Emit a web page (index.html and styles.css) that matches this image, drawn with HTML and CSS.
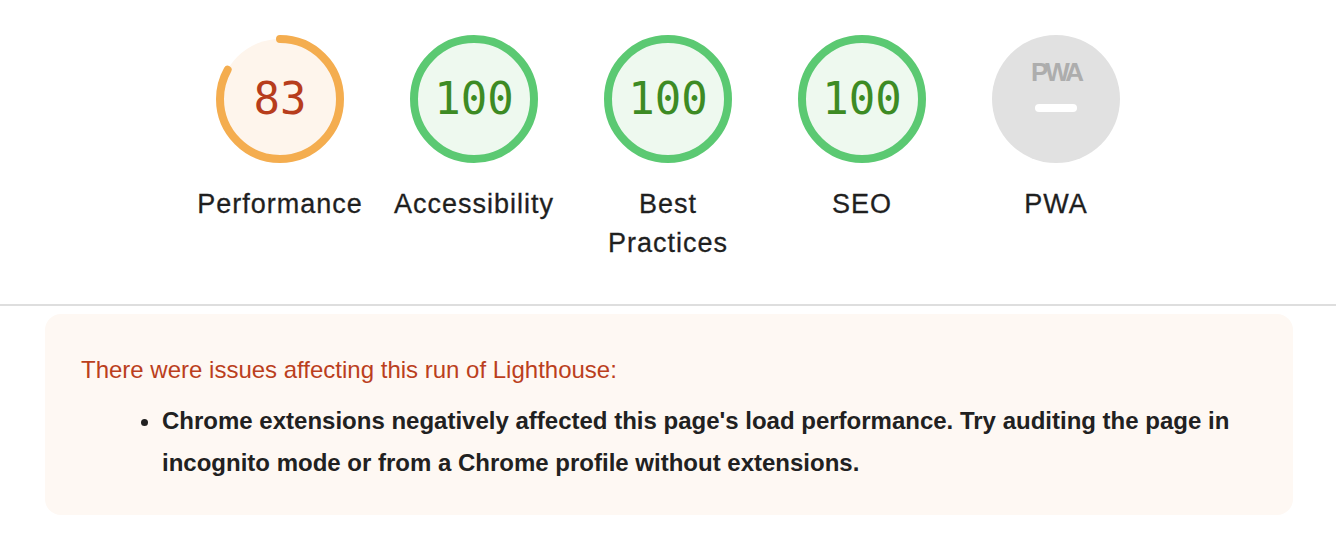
FILE: index.html
```html
<!DOCTYPE html>
<html lang="en">
<head>
<meta charset="utf-8">
<title>Lighthouse report</title>
<link rel="stylesheet" href="styles.css">
</head>
<body>
<div class="scores">
  <div class="gauges">
    <div class="gauge">
      <div class="ring">
        <svg viewBox="0 0 128 128" width="128" height="128">
          <circle class="fill-avg" cx="64" cy="64" r="60"/>
          <circle class="arc-avg" cx="64" cy="64" r="60" stroke-dasharray="312.9 400" transform="rotate(-90 64 64)"/>
        </svg>
        <span class="score score-avg">83</span>
      </div>
      <div class="label">Performance</div>
    </div>
    <div class="gauge">
      <div class="ring">
        <svg viewBox="0 0 128 128" width="128" height="128">
          <circle class="fill-pass" cx="64" cy="64" r="60"/>
          <circle class="arc-pass" cx="64" cy="64" r="60"/>
        </svg>
        <span class="score score-pass">100</span>
      </div>
      <div class="label">Accessibility</div>
    </div>
    <div class="gauge">
      <div class="ring">
        <svg viewBox="0 0 128 128" width="128" height="128">
          <circle class="fill-pass" cx="64" cy="64" r="60"/>
          <circle class="arc-pass" cx="64" cy="64" r="60"/>
        </svg>
        <span class="score score-pass">100</span>
      </div>
      <div class="label">Best Practices</div>
    </div>
    <div class="gauge">
      <div class="ring">
        <svg viewBox="0 0 128 128" width="128" height="128">
          <circle class="fill-pass" cx="64" cy="64" r="60"/>
          <circle class="arc-pass" cx="64" cy="64" r="60"/>
        </svg>
        <span class="score score-pass">100</span>
      </div>
      <div class="label">SEO</div>
    </div>
    <div class="gauge">
      <div class="ring">
        <svg viewBox="0 0 128 128" width="128" height="128">
          <circle class="fill-na" cx="64" cy="64" r="64"/>
          <text class="pwa-text" x="64" y="46" text-anchor="middle">PWA</text>
          <rect class="pwa-dash" x="43" y="69" width="42" height="8" rx="4"/>
        </svg>
      </div>
      <div class="label">PWA</div>
    </div>
  </div>
</div>
<div class="divider"></div>
<div class="warnings">
  <div class="warn-title">There were issues affecting this run of Lighthouse:</div>
  <ul class="warn-list">
    <li>Chrome extensions negatively affected this page's load performance. Try auditing the page in incognito mode or from a Chrome profile without extensions.</li>
  </ul>
</div>
</body>
</html>
```

FILE: styles.css
```css
html, body {
  margin: 0;
  padding: 0;
  background: #ffffff;
  font-family: "Liberation Sans", Arial, Helvetica, sans-serif;
  color: #212121;
}

.scores {
  padding: 35px 0 41px;
}

.gauges {
  display: flex;
  justify-content: center;
  gap: 18px;
}

.gauge {
  width: 176px;
  display: flex;
  flex-direction: column;
  align-items: center;
}

.ring {
  position: relative;
  width: 128px;
  height: 128px;
  margin-bottom: 22px;
}

.ring svg {
  display: block;
}

.fill-avg { fill: #fef5ec; }
.arc-avg {
  fill: none;
  stroke: #f4ad4f;
  stroke-width: 8;
  stroke-linecap: round;
}
.fill-pass { fill: #eef9ef; }
.arc-pass {
  fill: none;
  stroke: #5bc972;
  stroke-width: 8;
}
.fill-na { fill: #e1e1e1; }
.pwa-text {
  font-family: "Liberation Sans", Arial, sans-serif;
  font-weight: bold;
  font-size: 26px;
  letter-spacing: -3px;
  fill: #adadad;
}
.pwa-dash { fill: #ffffff; }

.score {
  position: absolute;
  inset: 0;
  display: flex;
  align-items: center;
  justify-content: center;
  font-family: "DejaVu Sans Mono", "Liberation Mono", monospace;
  font-size: 44px;
  line-height: 1;
}
.score-avg { color: #b73d1c; }
.score-pass { color: #3d8b24; }

.label {
  font-size: 27px;
  letter-spacing: 1px;
  line-height: 39px;
  text-align: center;
  color: #1f1f1f;
  -webkit-text-stroke: 0.3px #1f1f1f;
}

.divider {
  height: 2px;
  background: #dedede;
}

.warnings {
  margin: 8px 43px 0 45px;
  background: #fef8f3;
  border-radius: 16px;
  padding: 41px 36px 31px;
}

.warn-title {
  font-size: 24px;
  line-height: 30px;
  color: #bb3f1d;
}

.warn-list {
  margin: 15px 0 0;
  padding-left: 81px;
  font-size: 24px;
  line-height: 42px;
  font-weight: bold;
  color: #212121;
}
```
